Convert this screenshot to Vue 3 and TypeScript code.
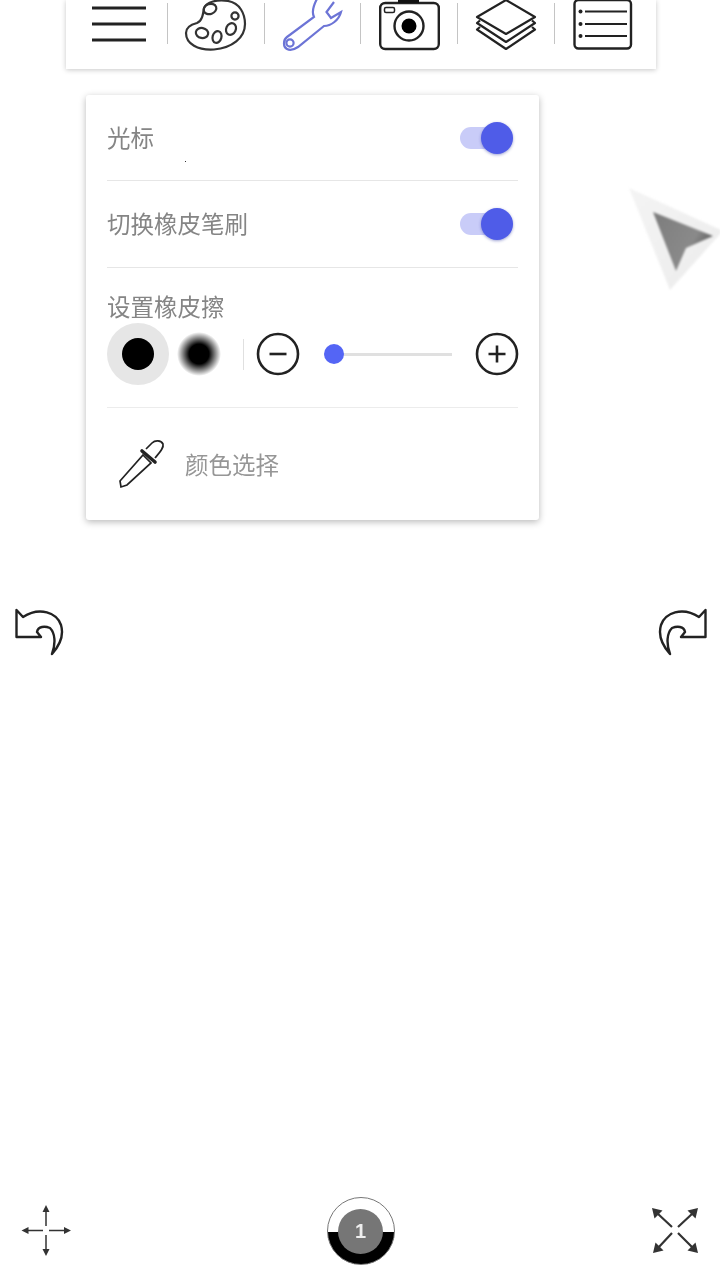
<script setup lang="ts">
import { ref, computed } from 'vue'

const cursorOn = ref(true)
const brushOn = ref(true)
const hardEraser = ref(true)
const eraserSize = ref(8)
const pageNumber = ref(1)

const sliderPct = computed(() => `${eraserSize.value}%`)

function changeSize(step: number) {
  eraserSize.value = Math.min(100, Math.max(0, eraserSize.value + step))
}
</script>

<template>
  <div class="page">
    <div class="toolbar">
      <div class="tool">
        <svg class="ico" viewBox="0 0 64 52">
          <path d="M5 8H59M5 24H59M5 40H59" stroke="#222" stroke-width="3" fill="none" />
        </svg>
      </div>
      <i class="sep"></i>
      <div class="tool">
        <svg class="ico" viewBox="184 0 64 52" fill="none" stroke="#333" stroke-width="2.2">
          <path d="M204 8C206 2 218 -1 228 1C240 3 245 14 245 24C245 38 232 48 214 49.5C198 50.5 186 44 186 33C186 26 193 24 197 23C202 21 203 15 204 8Z" />
          <ellipse cx="210" cy="9" rx="6.500" ry="5" transform="rotate(-20 210 9)" />
          <circle cx="235" cy="16" r="3.600" />
          <ellipse cx="231" cy="29" rx="4.800" ry="6" transform="rotate(25 231 29)" />
          <ellipse cx="217" cy="37" rx="4.400" ry="6" transform="rotate(15 217 37)" />
          <ellipse cx="202" cy="33" rx="6.200" ry="5" transform="rotate(10 202 33)" />
        </svg>
      </div>
      <i class="sep"></i>
      <div class="tool">
        <svg class="ico" viewBox="280 0 64 52" fill="none" stroke="#6c74d6" stroke-width="2.2">
          <path d="M316.5 -2C312 6 311 13 313 17L286 37C282 40 282 47 286 49C290 51 294 49 297 47L323 26C330 26 338 20 340 12L330 18L325.500 12L333 2" />
          <circle cx="289" cy="43" r="3.600" />
        </svg>
      </div>
      <i class="sep"></i>
      <div class="tool">
        <svg class="ico" viewBox="376 0 64 52" fill="none" stroke="#222" stroke-width="2.4">
          <rect x="379.200" y="3" width="58.600" height="46" rx="5" />
          <rect x="397" y="-1" width="21" height="4" fill="#111" stroke="none" />
          <rect x="383.500" y="7.500" width="10" height="5" rx="1.500" stroke-width="1.500" />
          <circle cx="408" cy="26" r="14.500" />
          <circle cx="408" cy="26" r="7.500" fill="#000" stroke="none" />
        </svg>
      </div>
      <i class="sep"></i>
      <div class="tool">
        <svg class="ico" viewBox="473 0 64 52" fill="none" stroke="#222" stroke-width="2.2" stroke-linejoin="round">
          <path d="M505 0L534 17L505 34L476 17Z" />
          <path d="M479 20.500L476 23L505 42L534 23L531 20.500" />
          <path d="M479 27L476 29.500L505 49L534 29.500L531 27" />
        </svg>
      </div>
      <i class="sep"></i>
      <div class="tool">
        <svg class="ico" viewBox="570 0 64 52" fill="none" stroke="#222">
          <rect x="573.500" y="0" width="56.500" height="48.500" rx="4" stroke-width="2.400" />
          <path d="M584 11.500H626M584 24H626M584 36H626" stroke-width="2" />
          <circle cx="579.500" cy="11.500" r="2" fill="#222" stroke="none" />
          <circle cx="579.500" cy="24" r="2" fill="#222" stroke="none" />
          <circle cx="579.500" cy="36" r="2" fill="#222" stroke="none" />
        </svg>
      </div>
    </div>

    <div class="panel">
      <div class="row row-cursor">
        <span class="label">光标</span>
        <div class="switch" :class="{ on: cursorOn }" @click="cursorOn = !cursorOn"><b></b></div>
        <i class="speck"></i>
      </div>
      <div class="row row-brush">
        <span class="label">切换橡皮笔刷</span>
        <div class="switch" :class="{ on: brushOn }" @click="brushOn = !brushOn"><b></b></div>
      </div>
      <div class="row-eraser">
        <span class="label">设置橡皮擦</span>
        <div class="eraser-controls">
          <div class="tip" :class="{ picked: hardEraser }" @click="hardEraser = true"><b class="hard"></b></div>
          <div class="tip soft-tip" :class="{ picked: !hardEraser }" @click="hardEraser = false"><b class="soft"></b></div>
          <i class="vline"></i>
          <svg class="round-btn" viewBox="0 0 44 44" @click="changeSize(-4)">
            <circle cx="22" cy="22" r="20" fill="none" stroke="#222" stroke-width="2.600" />
            <path d="M13.500 22H30.500" stroke="#222" stroke-width="2.600" />
          </svg>
          <div class="slider">
            <b :style="{ left: sliderPct }"></b>
          </div>
          <svg class="round-btn" viewBox="0 0 44 44" @click="changeSize(4)">
            <circle cx="22" cy="22" r="20" fill="none" stroke="#222" stroke-width="2.600" />
            <path d="M13.500 22H30.500M22 13.500V30.500" stroke="#222" stroke-width="2.600" />
          </svg>
        </div>
      </div>
      <div class="row-picker">
        <svg class="dropper" viewBox="115 435 55 55" fill="none" stroke="#222" stroke-width="1.700">
          <path d="M120 481L143 455L151 463L127 485L121 487Z" />
          <path d="M142 451L155 462" stroke-width="3.600" stroke-linecap="round" />
          <path d="M146 449L152 443C155 440 161 440 163 444C164 448 160 452 155 458" />
        </svg>
        <span class="picker-text">颜色选择</span>
      </div>
    </div>

    <svg class="pointer" viewBox="0 0 94 106">
      <defs>
        <linearGradient id="ptrOuter" x1="0" y1="0" x2="1" y2="1">
          <stop offset="0" stop-color="#f4f4f4" />
          <stop offset="1" stop-color="#ececec" />
        </linearGradient>
        <linearGradient id="ptrInner" x1="0" y1="0" x2="1" y2="0.600">
          <stop offset="0" stop-color="#7c7c7c" />
          <stop offset="0.700" stop-color="#8a8a8a" />
          <stop offset="1" stop-color="#555" />
        </linearGradient>
      </defs>
      <path d="M2 2L94 44L94 47L43 104Z" fill="url(#ptrOuter)" />
      <path d="M26 26L86 50L59 62L49 85Z" fill="url(#ptrInner)" />
    </svg>

    <div class="history">
      <svg class="turn" viewBox="0 0 50 50">
        <path d="M2.500 3V30H27L23 25C24 19 31 19 36 21C41 26 42 36 38 47C46 38 50 28 47 18C43 6 26 -1 9 10Z" fill="none" stroke="#222" stroke-width="2.400" stroke-linejoin="round" />
      </svg>
      <svg class="turn flip" viewBox="0 0 50 50">
        <path d="M2.500 3V30H27L23 25C24 19 31 19 36 21C41 26 42 36 38 47C46 38 50 28 47 18C43 6 26 -1 9 10Z" fill="none" stroke="#222" stroke-width="2.400" stroke-linejoin="round" />
      </svg>
    </div>

    <div class="footer">
      <svg class="move" viewBox="20 1204 52 54" fill="#333" stroke="none">
        <path d="M46 1212V1226M46 1235V1250M28 1230.500H43M49 1230.500H64" stroke="#333" stroke-width="1.500" />
        <path d="M46 1205L49.500 1212H42.500ZM46 1256L42.500 1249H49.500ZM21.500 1230.500L28.500 1227V1234ZM71 1230.500L64 1227V1234Z" />
      </svg>
      <div class="page-badge">
        <div class="page-num">{{ pageNumber }}</div>
      </div>
      <svg class="expand" viewBox="651 1206 48 50" fill="#333" stroke="none">
        <path d="M657 1213L672 1227M693 1213L678 1227M658 1248L672 1233M693 1248L678 1233" stroke="#333" stroke-width="2.200" />
        <path d="M652 1208L662.500 1210.500L654.500 1218.500ZM698 1208L695.500 1218.500L687.500 1210.500ZM653 1253L655.500 1242.500L663.500 1250.500ZM698 1253L687.500 1250.500L695.500 1242.500Z" />
      </svg>
    </div>
  </div>
</template>

<style scoped>
.page {
  position: relative;
  display: flex;
  flex-direction: column;
  width: 720px;
  height: 1280px;
  overflow: hidden;
  background: #fff;
  font-family: "Noto Sans CJK SC", "Noto Sans", sans-serif;
  filter: blur(0.4px);
}
.toolbar {
  display: flex;
  align-items: flex-start;
  box-sizing: border-box;
  flex: none;
  width: 590px;
  height: 69px;
  margin-left: 66px;
  padding: 0 5px;
  background: #fff;
  box-shadow: 0 1px 5px rgba(0, 0, 0, 0.22);
}
.tool {
  flex: 1;
  display: flex;
  justify-content: center;
}
.ico {
  display: block;
  width: 64px;
  height: 52px;
}
.sep {
  flex: none;
  width: 1px;
  height: 41px;
  margin-top: 3px;
  background: #c4c4c4;
}
.panel {
  flex: none;
  box-sizing: border-box;
  width: 453px;
  height: 425px;
  margin: 26px 0 0 86px;
  padding: 0 21px;
  background: #fff;
  border-radius: 3px;
  box-shadow: 0 2px 7px rgba(0, 0, 0, 0.28);
}
.row {
  position: relative;
  display: flex;
  align-items: center;
  justify-content: space-between;
  border-bottom: 1px solid #e6e6e6;
}
.row-cursor {
  height: 85px;
}
.row-brush {
  height: 86px;
}
.label {
  margin-top: -2px;
  font-size: 23.500px;
  line-height: 32px;
  color: #858585;
}
.switch {
  position: relative;
  width: 50px;
  height: 22px;
  margin-right: 8px;
  border-radius: 11px;
  background: #c9ccf8;
}
.switch b {
  position: absolute;
  top: -5px;
  left: 21px;
  width: 32px;
  height: 32px;
  border-radius: 50%;
  background: #4f5ce8;
  box-shadow: 0 1px 3px rgba(40, 50, 160, 0.45);
}
.speck {
  position: absolute;
  left: 78px;
  top: 66px;
  width: 1px;
  height: 1px;
  background: #333;
}
.row-eraser {
  box-sizing: border-box;
  height: 140px;
  padding-top: 22px;
  border-bottom: 1px solid #ececec;
}
.row-eraser .label {
  display: block;
  margin-top: 0;
}
.eraser-controls {
  display: flex;
  align-items: center;
  height: 62px;
  margin-top: 1px;
}
.tip {
  flex: none;
  display: flex;
  align-items: center;
  justify-content: center;
  width: 62px;
  height: 62px;
  border-radius: 50%;
}
.tip.picked {
  background: #e6e6e6;
}
.hard {
  width: 32px;
  height: 32px;
  border-radius: 50%;
  background: #000;
}
.soft-tip {
  width: 44px;
  height: 44px;
  margin-left: 8px;
}
.soft {
  width: 44px;
  height: 44px;
  border-radius: 50%;
  background: radial-gradient(circle closest-side, #000 0, #000 45%, rgba(0, 0, 0, 0.5) 72%, rgba(0, 0, 0, 0) 100%);
}
.vline {
  flex: none;
  width: 1px;
  height: 31px;
  margin: 0 12px 0 22px;
  background: #e0e0e0;
}
.round-btn {
  flex: none;
  width: 44px;
  height: 44px;
}
.slider {
  position: relative;
  flex: none;
  width: 128px;
  height: 3px;
  margin: 0 23px 0 24px;
  background: #e0e0e0;
}
.slider b {
  position: absolute;
  top: -8.500px;
  width: 20px;
  height: 20px;
  margin-left: -10px;
  border-radius: 50%;
  background: #5465f5;
}
.row-picker {
  display: flex;
  align-items: center;
  height: 112px;
  padding: 0 0 0 8px;
}
.dropper {
  flex: none;
  width: 55px;
  height: 55px;
  margin-top: -3px;
}
.picker-text {
  margin-left: 15px;
  margin-top: -1px;
  font-size: 23.500px;
  line-height: 32px;
  color: #969696;
}
.pointer {
  position: absolute;
  left: 627px;
  top: 186px;
  width: 94px;
  height: 106px;
  filter: blur(0.8px);
}
.history {
  flex: none;
  display: flex;
  justify-content: space-between;
  margin-top: 87px;
  padding: 0 12px 0 14px;
}
.turn {
  display: block;
  width: 50px;
  height: 50px;
}
.flip {
  transform: scaleX(-1);
}
.footer {
  display: flex;
  align-items: center;
  justify-content: space-between;
  margin-top: auto;
  padding: 0 21px 15px 20px;
}
.move {
  display: block;
  width: 52px;
  height: 54px;
}
.expand {
  display: block;
  width: 48px;
  height: 50px;
}
.page-badge {
  display: flex;
  align-items: center;
  justify-content: center;
  box-sizing: border-box;
  width: 68px;
  height: 68px;
  margin-left: -2px;
  border: 1.500px solid #777;
  border-radius: 50%;
  background: linear-gradient(#fff 52%, #000 52%);
}
.page-num {
  width: 45px;
  height: 45px;
  border-radius: 50%;
  background: #767676;
  color: #eee;
  font-family: "Liberation Sans", sans-serif;
  font-size: 20px;
  font-weight: 700;
  line-height: 45px;
  text-align: center;
}
</style>

<style>
body {
  background: #fff;
}
</style>
